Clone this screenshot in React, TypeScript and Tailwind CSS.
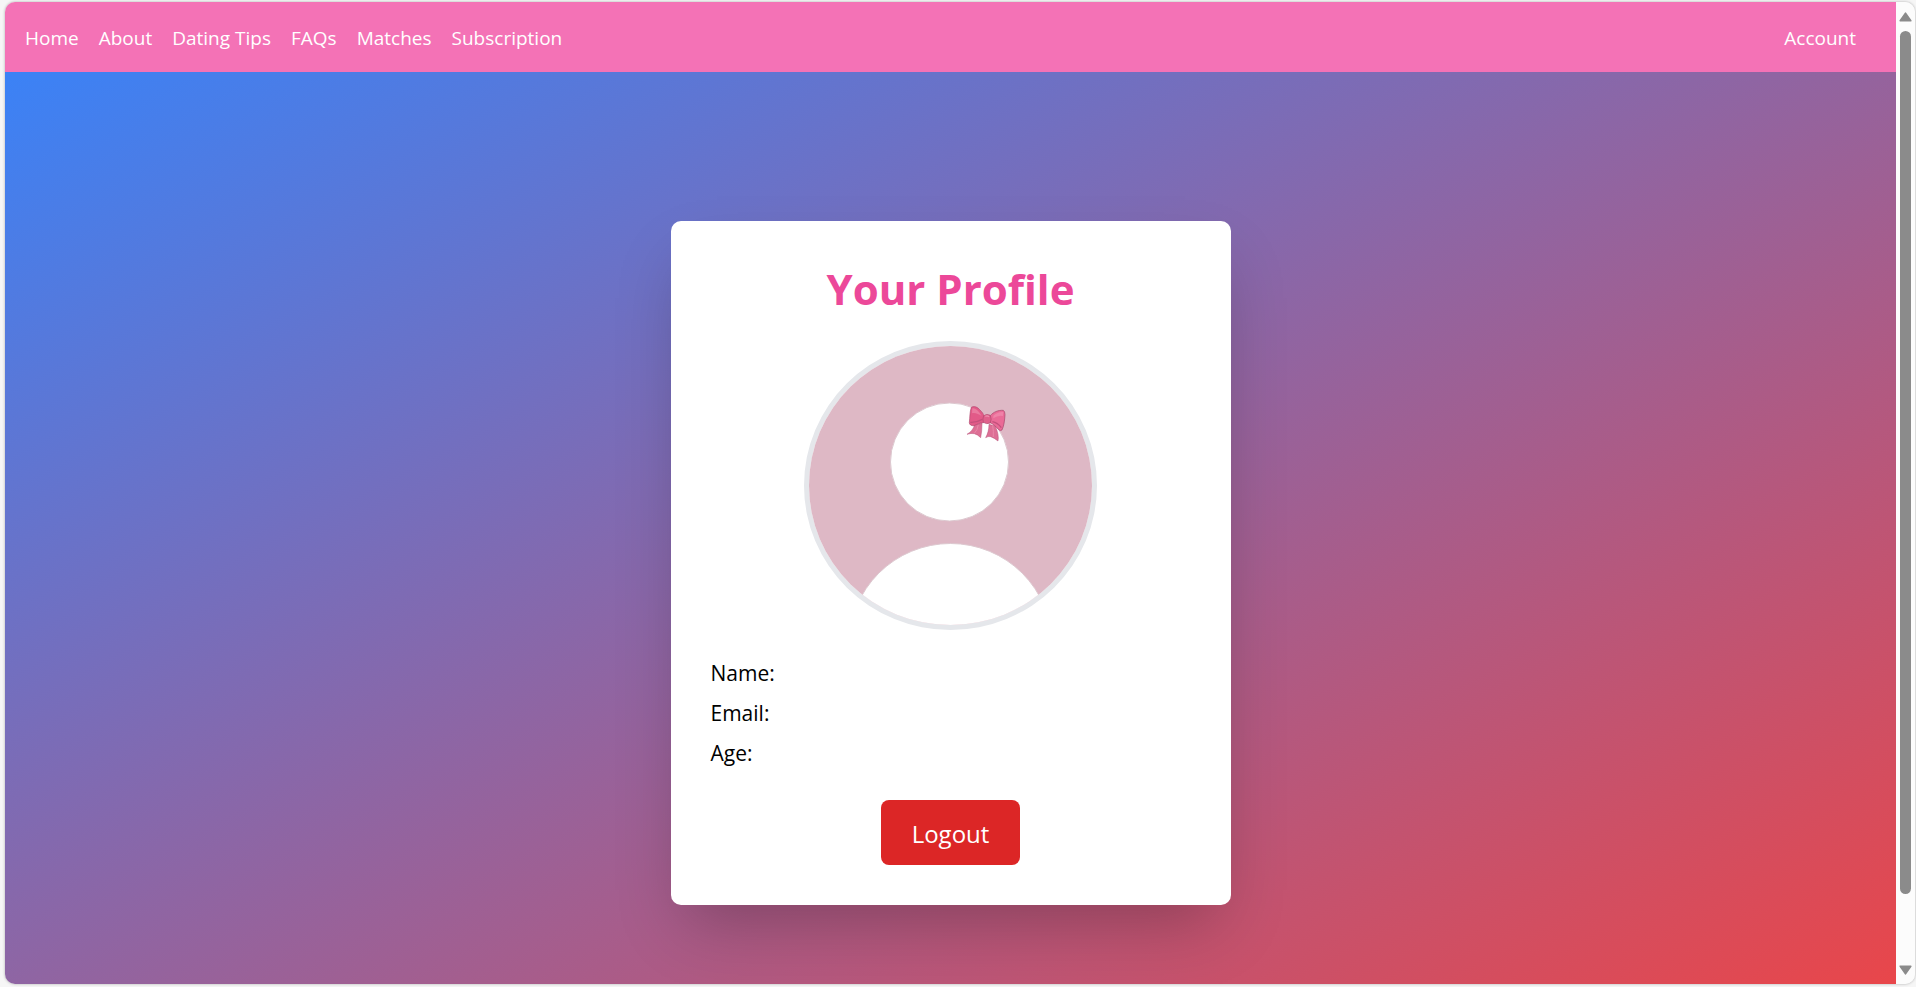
const links = ["Home", "About", "Dating Tips", "FAQs", "Matches", "Subscription"];
const fields = ["Name:", "Email:", "Age:"];

function Bow() {
  return (
    <g transform="translate(131 44) scale(.3333)" strokeLinejoin="round">
      <path d="M104 104C101 116 93 126 81 133Q93 129 103 131Q114 134 122 143Q126 124 126 100Z" fill="#dd6f95" stroke="#b9527a" strokeWidth="1.5" />
      <path d="M147 103C147 119 143 132 137 143Q144 138 152 140Q163 144 174 153Q178 136 166 108Z" fill="#dd6f95" stroke="#b9527a" strokeWidth="1.5" />
      <path d="M115 104Q113 120 103 130M158 106Q161 124 160 141" fill="none" stroke="#e987a8" strokeWidth="3" />
      <path d="M94 52C102 47 112 51 119 59C126 66 131 72 133 78L131 98C120 98 112 103 102 107C94 108 88 104 88 98C90 82 89 66 94 52Z" fill="#e25a88" stroke="#b04a70" strokeWidth="2" />
      <path d="M151 77C160 66 175 60 190 61Q195 64 195 74C194 91 192 108 186 120Q181 124 176 119C168 109 158 101 150 98Z" fill="#ea6b97" stroke="#a5466a" strokeWidth="2" />
      <path d="M97 55C107 53 119 67 125 78C115 72 105 67 96 70Z" fill="#e97a9f" />
      <path d="M160 77Q175 64 190 66L189 78Q175 74 160 85Z" fill="#ef83a8" />
      <path d="M91 97Q109 98 127 88M157 95Q173 98 184 113" fill="none" stroke="#c4507c" strokeWidth="4" />
      <path d="M131 77Q141 70 151 76Q156 88 151 99Q140 104 130 97Q127 87 131 77Z" fill="#e0608b" stroke="#b04a70" strokeWidth="2" />
      <path d="M136 79Q142 76 147 80" fill="none" stroke="#ef8eae" strokeWidth="4" />
    </g>
  );
}

function Avatar() {
  return (
    <div className="h-[289px] w-[293px] overflow-hidden rounded-[50%] border-5 border-gray-200">
      <svg viewBox="0 0 283 279" className="block size-full" role="img" aria-label="Profile picture">
        <rect width="283" height="279" fill="#deb8c5" />
        <circle cx="140.5" cy="116" r="59" fill="#fff" stroke="#dcc8cf" strokeWidth="1" />
        <circle cx="141.5" cy="299" r="101.5" fill="#fff" stroke="#dcc8cf" strokeWidth="1" />
        <Bow />
      </svg>
    </div>
  );
}

function ScrollRail() {
  return (
    <div aria-hidden="true" className="flex w-[19px] shrink-0 flex-col items-center bg-[#fcfcfc] pt-2.5 pb-[9px]">
      <svg width="13" height="10" viewBox="0 0 13 10" className="shrink-0">
        <path d="M6.5 1.2L11.8 8.8H1.2Z" fill="#8b8b8b" stroke="#8b8b8b" strokeWidth="1.6" strokeLinejoin="round" />
      </svg>
      <div className="mt-[9px] flex min-h-0 w-[11px] flex-1 flex-col">
        <div className="h-[92.4%] rounded-full bg-[#8b8b8b]" />
      </div>
      <svg width="13" height="10" viewBox="0 0 13 10" className="shrink-0">
        <path d="M6.5 8.8L1.2 1.2H11.8Z" fill="#8b8b8b" stroke="#8b8b8b" strokeWidth="1.6" strokeLinejoin="round" />
      </svg>
    </div>
  );
}

export default function App() {
  return (
    <div className="flex h-screen bg-[#f6f6f6] pt-0.5 pr-px pb-[3px] pl-[5px] font-['Open_Sans','Noto_Sans',sans-serif]">
      <div className="flex min-w-0 flex-1 overflow-hidden rounded-[10px] shadow-[0_0_3px_rgba(0,0,0,0.3)]">
        <div className="min-w-0 flex-1 overflow-y-auto [scrollbar-width:none]">
          <nav className="flex items-center justify-between bg-[#f472b6] px-5 pt-[21px] pb-[19px] text-[19px] leading-[30px] text-white">
            <ul className="flex gap-5">
              {links.map((label) => (
                <li key={label}>
                  <a href="#">{label}</a>
                </li>
              ))}
            </ul>
            <a href="#" className="mr-5">Account</a>
          </nav>
          <main className="flex min-h-[calc(100vh-5px)] items-center justify-center bg-[linear-gradient(to_bottom_right,#3b82f6,#ef4444)]">
            <section className="flex w-full max-w-[560px] flex-col items-center rounded-[10px] bg-white p-10 shadow-[0_31px_62px_-15px_rgba(0,0,0,0.25)]">
              <h1 className="mb-6 text-[42px] leading-[56px] font-bold text-[#ec4899]">Your Profile</h1>
              <Avatar />
              <div className="mt-[26px] flex w-full flex-col gap-[5px] text-[21px] leading-[35px] text-black">
                {fields.map((label) => (
                  <p key={label}>{label}</p>
                ))}
              </div>
              <button type="button" className="mt-[29px] rounded-lg bg-[#dc2626] px-[31px] pt-4 pb-3.5 text-2xl leading-[35px] text-white">
                Logout
              </button>
            </section>
          </main>
        </div>
        <ScrollRail />
      </div>
    </div>
  );
}
